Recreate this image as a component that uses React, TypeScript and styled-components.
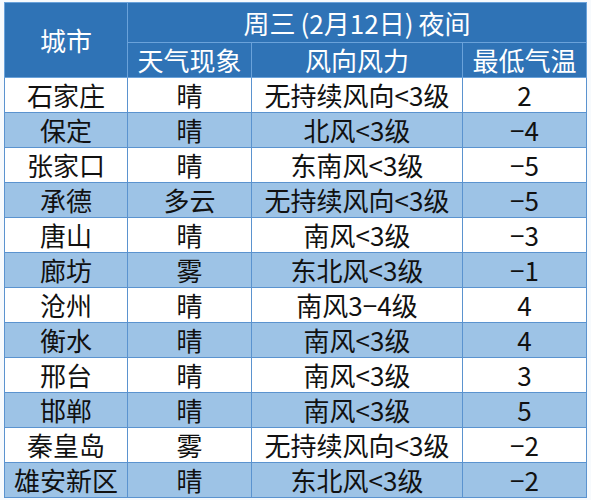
import React from 'react';
import styled, { createGlobalStyle } from 'styled-components';

interface IRow {
    city: string;
    weather: string;
    wind: string;
    low: string;
}

const rows: IRow[] = [
    { city: '石家庄', weather: '晴', wind: '无持续风向<3级', low: '2' },
    { city: '保定', weather: '晴', wind: '北风<3级', low: '−4' },
    { city: '张家口', weather: '晴', wind: '东南风<3级', low: '−5' },
    { city: '承德', weather: '多云', wind: '无持续风向<3级', low: '−5' },
    { city: '唐山', weather: '晴', wind: '南风<3级', low: '−3' },
    { city: '廊坊', weather: '雾', wind: '东北风<3级', low: '−1' },
    { city: '沧州', weather: '晴', wind: '南风3−4级', low: '4' },
    { city: '衡水', weather: '晴', wind: '南风<3级', low: '4' },
    { city: '邢台', weather: '晴', wind: '南风<3级', low: '3' },
    { city: '邯郸', weather: '晴', wind: '南风<3级', low: '5' },
    { city: '秦皇岛', weather: '雾', wind: '无持续风向<3级', low: '−2' },
    { city: '雄安新区', weather: '晴', wind: '东北风<3级', low: '−2' },
];

const GlobalStyle = createGlobalStyle`
    html, body {
        margin: 0;
        background: #f7fafd;
    }
    body {
        font-family: "Noto Sans CJK SC", "Noto Sans", sans-serif;
    }
`;

const App = () => {
    return (
        <>
            <GlobalStyle />
            <Page>
                <WeatherTable>
                    <colgroup>
                        <col style={{ width: 123 }} />
                        <col style={{ width: 124 }} />
                        <col style={{ width: 211 }} />
                        <col style={{ width: 124 }} />
                    </colgroup>
                    <thead>
                        <HeadRow $top>
                            <HeadCell rowSpan={2}>城市</HeadCell>
                            <HeadCell colSpan={3}>周三<Paren>(2月12日)</Paren>夜间</HeadCell>
                        </HeadRow>
                        <HeadRow>
                            <HeadCell>天气现象</HeadCell>
                            <HeadCell>风向风力</HeadCell>
                            <HeadCell>最低气温</HeadCell>
                        </HeadRow>
                    </thead>
                    <tbody>
                        {rows.map((r, i) => (
                            <DataRow key={r.city} $shaded={i % 2 === 1}>
                                <Cell>{r.city}</Cell>
                                <Cell>{r.weather}</Cell>
                                <Cell>{r.wind}</Cell>
                                <Cell>{r.low}</Cell>
                            </DataRow>
                        ))}
                    </tbody>
                </WeatherTable>
            </Page>
        </>
    );
};

export default App;

const Page = styled.div`
    padding: 2px 0 0 4px;
`;

const WeatherTable = styled.table`
    border-collapse: collapse;
    table-layout: fixed;
    width: 582px;
    border: 1px solid #5b93cf;
`;

const HeadRow = styled.tr<{ $top?: boolean }>`
    height: ${p => (p.$top ? '40px' : '35px')};
    background: #2f73b6;
`;

const HeadCell = styled.th`
    padding: 0;
    border: 1px solid #6aa2da;
    color: #ffffff;
    font-weight: 400;
    font-size: 26px;
    line-height: 1;
    text-align: center;
    vertical-align: middle;
    white-space: nowrap;
`;

const Paren = styled.span`
    margin: 0 5px;
`;

const DataRow = styled.tr<{ $shaded: boolean }>`
    height: 35px;
    background: ${p => (p.$shaded ? '#9dc3e6' : '#ffffff')};
`;

const Cell = styled.td`
    padding: 0;
    border: 1px solid #5b93cf;
    color: #111111;
    font-size: 26px;
    line-height: 1;
    text-align: center;
    vertical-align: middle;
    white-space: nowrap;
`;
